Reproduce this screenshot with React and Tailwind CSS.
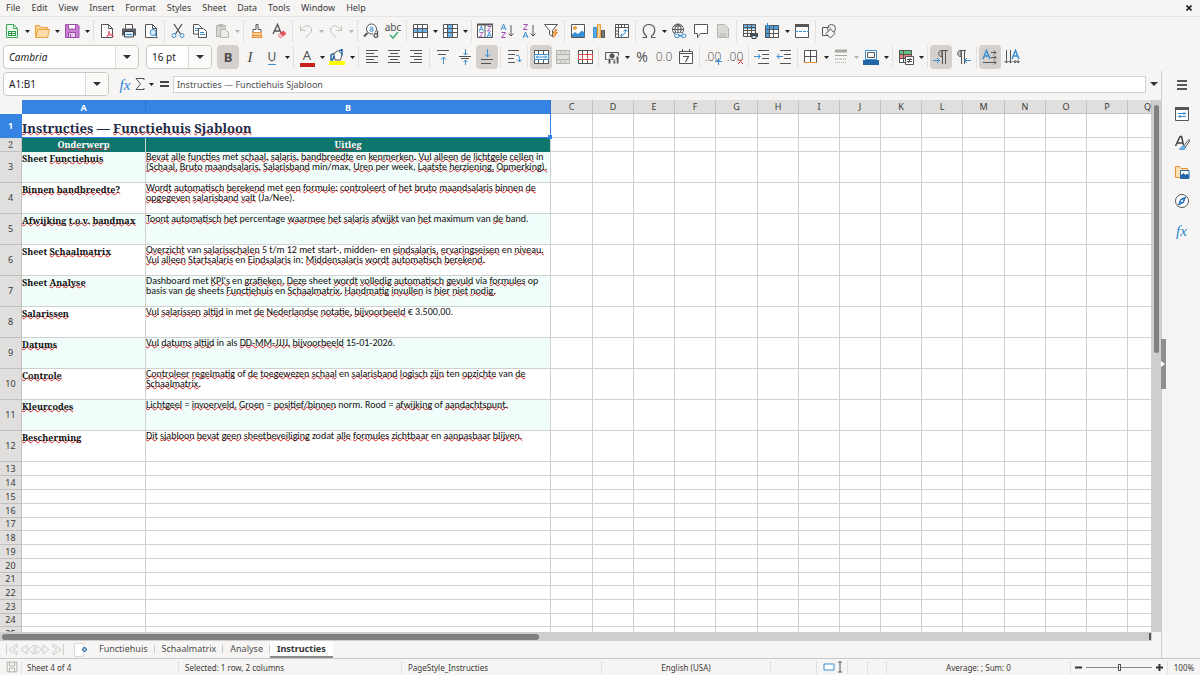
import React, { useState } from 'react';
import clsx from 'clsx';

const G = '#555555';
const B = '#3a8fd3';

const Svg = ({ children, w = 16, h = 16, vb }) => (
    <svg width={w} height={h} viewBox={vb || `0 0 ${w} ${h}`} fill="none" stroke={G} strokeWidth="1" className="block shrink-0">
        {children}
    </svg>
);

const lines = (list) => list.map(([x1, x2, y], i) => <path key={i} d={`M${x1} ${y}H${x2}`} />);

const Table = ({ stroke = G }) => (
    <g stroke={stroke}>
        <path d="M1.5 1.5h14v13h-14zM1.5 5.5h14M1.5 9.5h14M5.5 1.5v13M10.5 1.5v13" />
    </g>
);

const icons = {
    newDoc: (
        <Svg>
            <path d="M2.5 1.5h7l4 4v9h-11z" fill="#e9f7ec" stroke="#43a85c" />
            <path d="M9.5 1.5v4h4" stroke="#43a85c" />
            <path d="M4 8h8v5H4z" fill="#2f9e4b" stroke="none" />
            <path d="M5 9.5h2M8 9.5h3M5 11.5h2M8 11.5h3" stroke="#fff" />
        </Svg>
    ),
    open: (
        <Svg>
            <path d="M1.5 13.5v-11h4l1.500 2h6.500v2" fill="#f7cf95" stroke="#e8a33d" />
            <path d="M1.500 14.500l2.500-8h11.500l-2 8z" fill="#fbdca9" stroke="#e8a33d" />
        </Svg>
    ),
    save: (
        <Svg>
            <path d="M1.500 1.500h12l1.500 1.500v11.500h-13.500z" fill="#c77fd0" stroke="#9c4fa8" />
            <path d="M4.500 1.500h7v4.500h-7z" fill="#fff" stroke="#9c4fa8" />
            <path d="M4.500 9.500h7v5h-7z" fill="#e9c9ee" stroke="#9c4fa8" />
            <path d="M6.500 11v3.500" stroke="#9c4fa8" />
        </Svg>
    ),
    pdf: (
        <Svg>
            <path d="M2.500 1.500h7l4 4v9h-11z" fill="#fff" />
            <path d="M9.500 1.500v4h4" />
            <path d="M7 14.500c2-1 3-3.500 3-6.500M10 8.500c.5 2.500 2 4 4.500 5M8 13c2-1.200 4-1.500 6.500-1" stroke="#d9485a" />
        </Svg>
    ),
    print: (
        <Svg>
            <path d="M4.500 6V1.500h7V6" fill="#fff" />
            <path d="M1 5.500h14v7H1z" fill="#5a5f66" stroke="none" />
            <path d="M3.500 8.500h9v5.500h-9z" fill="#dceefb" stroke="#3b4046" />
            <path d="M5 11.500h6" stroke={B} />
        </Svg>
    ),
    preview: (
        <Svg>
            <path d="M2.500 1.500h7l4 4v9h-11z" fill="#fff" />
            <path d="M9.500 1.500v4h4" />
            <circle cx="10" cy="9.500" r="3" fill="#d9ecfa" stroke={B} />
            <path d="M12 12l3 3" stroke={B} />
        </Svg>
    ),
    cut: (
        <Svg>
            <path d="M4 1l6.500 10M12 1L5.500 11" strokeWidth="1.300" />
            <circle cx="4" cy="12.500" r="2" stroke={B} />
            <circle cx="12" cy="12.500" r="2" stroke={B} />
        </Svg>
    ),
    copy: (
        <Svg>
            <path d="M1.500 1.500h5l3 3v6.500h-8z" fill="#fff" />
            <path d="M3 5.500h4M3 7.500h3" stroke={B} />
            <path d="M6.500 5.500h5l3 3v6h-8z" fill="#fff" />
            <path d="M8 9.500h4M8 11.500h5" stroke={B} />
        </Svg>
    ),
    paste: (
        <Svg>
            <path d="M2.500 2.500h9v11h-9z" fill="#d8d6d4" stroke="#b5b3b0" />
            <path d="M5 1.500h4v2H5z" fill="#c4c2bf" stroke="#b5b3b0" />
            <path d="M6.500 6.500h5l3 3v5h-8z" fill="#ecebea" stroke="#b5b3b0" />
        </Svg>
    ),
    brush: (
        <Svg>
            <path d="M7 1.500h2v5h3v3H4v-3h3z" fill="#fff" />
            <path d="M4 9.500h8l1 5H3z" fill="#f9cf95" stroke="#e8923d" />
            <path d="M3 12.500h10" stroke="#e8923d" />
        </Svg>
    ),
    clear: (
        <Svg>
            <path d="M2 11l4.500-9.500L10 10M3.500 8h5" strokeWidth="1.400" />
            <path d="M7 12.500l5-4.500 3 2.500-5 4.500z" fill="#e4505a" stroke="#e4505a" />
            <path d="M7 12.500l2-2 3 3-1.500 1.500z" fill="#f6c4c8" stroke="none" />
        </Svg>
    ),
    undo: (
        <Svg>
            <path d="M2.500 2.500v5h5M2.500 7.500l4-4c3-2 7 0 7 3.500 0 2.500-2 4-6 7.500" stroke="#c3c1be" />
        </Svg>
    ),
    redo: (
        <Svg>
            <path d="M13.500 2.500v5h-5M13.500 7.500l-4-4c-3-2-7 0-7 3.500 0 2.500 2 4 6 7.500" stroke="#c3c1be" />
        </Svg>
    ),
    find: (
        <Svg>
            <circle cx="8.500" cy="6" r="5" fill="#fff" />
            <path d="M4.500 10L1 13.500" strokeWidth="2" />
            <path d="M7 4.500c1-1 3-.5 3 1V8c-1.500.5-3.200.5-3.200-.8S8.500 6 10 6" stroke={B} />
            <path d="M10 9.500h6V16h-6z" fill="#f6f5f4" stroke="none" />
            <path d="M14.500 7.500v7M14.500 11.500c-1-1.500-3.500-1-3.500 1s2.500 2.500 3.500 1" strokeWidth="1.300" />
        </Svg>
    ),
    table: (fill) => (
        <Svg>
            <path d="M1.500 1.500h14v13h-14z" fill="#fff" stroke="none" />
            {fill === 'row' && <path d="M1 5h15v4H1z" fill="#6db5ea" stroke="none" />}
            {fill === 'col' && <path d="M6 1h4v14H6z" fill="#6db5ea" stroke="none" />}
            <Table />
        </Svg>
    ),
    filter: (
        <Svg>
            <path d="M1.500 1.500h13l-5 6v6l-3-2v-4z" fill="#fff" />
            <path d="M12.500 6.500l-3 4.500h2.500l-2 4 4.500-5.500H12l2-3z" fill="#f5a94e" stroke="#e8923d" />
        </Svg>
    ),
    image: (
        <Svg>
            <path d="M1.500 1.500h13v13h-13z" fill="#fff" />
            <circle cx="5" cy="5" r="1.500" fill="#f5b45e" stroke="#e8923d" />
            <path d="M2 14v-2.500l3-2.500 3 2 4-3.500 2.500 2V14z" fill="#3a8fd3" stroke="none" />
        </Svg>
    ),
    chart: (
        <Svg>
            <path d="M1.500 4.500h3v10h-3z" fill="#5fade6" stroke={B} />
            <path d="M5.500 1.500h3v13h-3z" fill="#fbd298" stroke="#e8a33d" />
            <path d="M9.500 7.500h3v7h-3z" fill="#777" />
        </Svg>
    ),
    pivot: (
        <Svg>
            <path d="M1.500 1.500h13v13h-13z" fill="#fff" />
            <path d="M1.500 4.500h13M4.500 1.500v13M7.500 1.500v3M10.500 1.500v3M1.500 8h3M1.500 11h3" />
            <path d="M6.500 12.500c3.500 0 5-2 5-5.500M9.500 8.500l2-2 2 2M8.500 10.500l-2 2 2 2" stroke={B} />
        </Svg>
    ),
    omega: (
        <Svg>
            <path d="M1.500 14.500h4v-1.500C0 8.500 2 1.500 8 1.500s8 7 2.500 11.500v1.500h4" strokeWidth="1.200" />
        </Svg>
    ),
    link: (
        <Svg>
            <circle cx="7" cy="6.500" r="5.500" />
            <path d="M1.500 6.500h11M7 1v11M3 3h8M3 10h8M7 1C3 4 3 9 7 12M7 1c4 3 4 8 0 11" />
            <path d="M4 10h11v5H4z" fill="#f6f5f4" stroke="none" />
            <rect x="3.500" y="11" width="5" height="3.500" rx="1.700" stroke={B} />
            <rect x="10" y="11" width="5" height="3.500" rx="1.700" stroke={B} />
            <path d="M7 12.800h5" stroke={B} />
        </Svg>
    ),
    comment: (
        <Svg>
            <path d="M1.500 1.500h13v9h-7l-3 4v-4h-3z" fill="#fff" />
        </Svg>
    ),
    headerDoc: (
        <Svg>
            <path d="M2.500 1.500h7l4 4v9h-11z" fill="#dbdad8" stroke="#b5b3b0" />
            <path d="M4.500 11h7M4.500 13h7" stroke="#b5b3b0" />
        </Svg>
    ),
    printArea: (
        <Svg>
            <path d="M1 1h13v5H1z" fill="#6db5ea" stroke="none" />
            <path d="M1.500 1.500h12v12h-12zM1.500 4.500h12M1.500 7.500h12M1.500 10.500h12M5.500 1.500v12M9.500 1.500v12" />
            <path d="M8 10h8v4H8z" fill="#4c5157" stroke="none" />
            <path d="M10 12.500h4v3h-4z" fill="#cfe6f8" stroke="#3b4046" />
        </Svg>
    ),
    freeze: (
        <Svg>
            <path d="M1.500 2.500h13v12h-13z" fill="#fff" />
            <path d="M2 2h13v4H6v9H2z" fill="#4ba0e0" stroke="none" />
            <path d="M1.500 2.500h13v12h-13zM1.500 6.500h13M5.500 2.500v12M9.500 2.500v12M1.500 10.500h13" />
            <path d="M3.500 0v5M1 2.500h5" stroke={B} />
        </Svg>
    ),
    split: (
        <Svg>
            <path d="M1.500 1.500h13v13h-13z" fill="#fff" />
            <path d="M1 1h14v3H1z" fill={G} stroke="none" />
            <path d="M1 8.500h14" stroke={B} strokeDasharray="3 1" />
        </Svg>
    ),
    shapes: (
        <Svg>
            <path d="M1.500 4.500h8v8h-8z" />
            <circle cx="10.500" cy="5.500" r="4" fill="#f6f5f4" fillOpacity=".5" />
            <path d="M9.500 6l4.500 4.500-4.500 4.500L5 10.500z" fill="#f6f5f4" />
        </Svg>
    ),
    // formatting bar
    vTop: (
        <Svg>{lines([[2, 14, 1.5], [3, 11, 5.5]])}<path d="M8.500 15V8M6 10.500L8.500 8l2.500 2.500" stroke={B} /></Svg>
    ),
    vMid: (
        <Svg>{lines([[2, 14, 7.5], [4, 12, 9.5]])}<path d="M8.500 0v6M6.500 4l2 2 2-2M8.500 16v-5M6.500 13l2-2 2 2" stroke={B} /></Svg>
    ),
    vBot: (
        <Svg>{lines([[2, 14, 10.5], [2, 12, 14.5]])}<path d="M8.500 0v8M6 5.500L8.500 8 11 5.500" stroke={B} /></Svg>
    ),
    wrap: (
        <Svg>{lines([[2, 13, 1.500], [2, 9, 5.500], [2, 8, 9.500], [2, 9, 13.500]])}<path d="M10 6.500h1.500c1.500 0 2 1 2 3v3M11 10.500l2.500 2.500 2-2.500" stroke={B} /></Svg>
    ),
    mergeOn: (
        <Svg><path d="M1.500 1.500h14v13h-14z" fill="#fff" /><Table /><path d="M1.500 5.500h14v5h-14z" fill="#fff" stroke={B} /><path d="M3 8h11M5 6.500L3.500 8 5 9.500M12 6.500L13.500 8 12 9.500" stroke={B} /></Svg>
    ),
    merge: (
        <Svg><path d="M1.500 1.500h13v13h-13zM1.500 5.500h13M1.500 10.500h13M6 1.500v4M10 1.500v4M6 10.500v4M10 10.500v4" fill="#e0dfdd" stroke="#b5b3b0" /></Svg>
    ),
    unmerge: (
        <Svg><path d="M1.500 1.500h14v13h-14z" fill="#fff" /><Table /><path d="M1.500 5.500h14v5h-14zM5.500 5.500v5M10.500 5.500v5" fill="#fff" stroke="#dd4b4b" /></Svg>
    ),
    currency: (
        <Svg>
            <path d="M1.500 3.500h13v7h-13z" />
            <circle cx="8" cy="7" r="2.200" fill={G} />
            <path d="M4 9h3v6H4zM9 11h3v4H9zM12 7h3v8h-3z" fill={G} stroke="#f6f5f4" />
        </Svg>
    ),
    date: (
        <Svg>
            <path d="M1.500 2.500h13v12h-13zM1.500 4.500h13M4.500 0v3M11.500 0v3" fill="#fff" />
            <path d="M5 7.500h5.500L7.500 13" strokeWidth="1.200" />
        </Svg>
    ),
    indent: (
        <Svg>{lines([[4, 15, 1.5], [8, 15, 5.5], [8, 15, 9.5], [4, 15, 14.5]])}<path d="M0 7.500h6M4 5l2.500 2.500L4 10" stroke={B} /></Svg>
    ),
    outdent: (
        <Svg>{lines([[4, 15, 1.5], [8, 15, 5.5], [8, 15, 9.5], [4, 15, 14.5]])}<path d="M1 7.500h6M3.500 5L1 7.500 3.500 10" stroke={B} /></Svg>
    ),
    borders: (
        <Svg><path d="M1.500 1.500h12v12h-12zM7.500 1.500v12M1.500 7.500h12" fill="#fff" /><path d="M1 13.500h13" stroke="#e8923d" /></Svg>
    ),
    lineStyle: (
        <Svg>
            <path d="M2 2h12" stroke="#aaa8a5" strokeWidth="3" />
            <path d="M2 6.500h12" stroke="#aaa8a5" />
            <path d="M2 10h12" stroke="#aaa8a5" strokeDasharray="3 1" />
            <path d="M2 13.500h12" stroke="#aaa8a5" strokeDasharray="1 1" />
        </Svg>
    ),
    lineColor: (
        <Svg>
            <path d="M2.500 1.500h11v9h-11z" fill="#fff" stroke={B} />
            <path d="M4.500 3.500h7v5h-7z" />
            <path d="M0 11h16v5H0z" fill="#2465a8" stroke="none" />
        </Svg>
    ),
    conditional: (
        <Svg>
            <path d="M1.500 1.500h12v12h-12z" fill="#fff" />
            <path d="M2 2h11v3H2z" fill="#5fc27e" stroke="none" />
            <path d="M2 5h11v4H2z" fill="#ea8080" stroke="none" />
            <path d="M1.500 5.500h12M1.500 9.500h12M5.500 1.500v12M1.500 1.500h12v12h-12z" />
            <path d="M7.500 7.500h8v8h-8z" fill="#fff" />
            <path d="M9 10.500h5M9 12.500h5M12.500 9l-2 5" />
        </Svg>
    ),
    ltr: (
        <Svg>
            <path d="M9 1.500C4.500 1 4.500 8 9 7.500z" fill="#c4c4c4" />
            <path d="M8 1.500h7M9.500 1.500V15M12.500 1.500V15" />
            <path d="M0 11.500h6M4 9l2.500 2.500L4 14" stroke={B} />
        </Svg>
    ),
    rtl: (
        <Svg>
            <path d="M6 1.500C1.500 1 1.500 8 6 7.500z" fill="#c4c4c4" />
            <path d="M5 1.500h6M6.500 1.500V15M9.500 1.500V15" />
            <path d="M16 11.500h-6M12 9l-2.500 2.500L12 14" stroke={B} />
        </Svg>
    ),
    textLr: (
        <Svg>
            <path d="M1 10L4.500 1.500 8 10M2.500 7h4" stroke={B} strokeWidth="1.500" />
            <path d="M9 3.500h5M9 8.500h5M1 13.500h13M12 1.500l2 2-2 2M12 6.500l2 2-2 2M12 11.500l2 2-2 2" />
        </Svg>
    ),
    textTb: (
        <Svg>
            <path d="M8 10l3.500-8.500L15 10M9.500 7h4" stroke={B} strokeWidth="1.500" />
            <path d="M2.500 1v13M6.500 1v13M11 11v3M14 11v3M.5 12l2 2 2-2M5 12l1.500 2 2-2M9.500 12l1.500 2 1.500-2M12.500 12l1.500 2 1.500-2" />
        </Svg>
    ),
    // sidebar
    menu: <Svg>{[4, 8, 12].map((y) => <path key={y} d={`M3 ${y}h10`} strokeWidth="1.600" stroke="#333" />)}</Svg>,
    properties: (
        <Svg>
            <path d="M1.500 1.500h13v13h-13z" fill="#fff" />
            <path d="M1 1h14v3H1z" fill={G} stroke="none" />
            <path d="M4 7.500h8M4 10.500h8M10 6v3M6 9v3" stroke={B} />
        </Svg>
    ),
    styles: (
        <Svg>
            <path d="M1.500 11L6 1.500h1.500L9.500 10M3.500 8h6" strokeWidth="1.500" stroke="#444" />
            <path d="M15 4.500l-5 6 1.500 1.500 4-6z" fill="#fff" />
            <path d="M10 10.500c-2 0-2 2-4.500 3.500 3 1.500 6 .5 6-2z" fill="#6db5ea" stroke={B} />
        </Svg>
    ),
    gallery: (
        <Svg>
            <path d="M1.500 13.500v-11h4l1.500 2h6.500v9z" fill="#fde0b4" stroke="#e8923d" />
            <path d="M6.500 6.500h8.500v8h-8.500z" fill="#fff" stroke="#2465a8" />
            <path d="M7 14v-3l2.500-2 2 2 1.500-1.500 2 2V14z" fill="#2465a8" stroke="none" />
        </Svg>
    ),
    navigator: (
        <Svg>
            <circle cx="8" cy="8" r="6.500" fill="#fff" />
            <path d="M11.500 4L9.500 9.500 4.500 12l2-5.500z" fill="#3a8fd3" stroke="#2465a8" />
            <circle cx="8" cy="8" r="1" fill="#fff" stroke="none" />
        </Svg>
    ),
    disk: (
        <Svg w={12} h={12} vb="0 0 16 16">
            <path d="M1.500 1.500h13v13h-13zM4.500 1.500v5h7v-5M4.500 14.500v-5h7v5" stroke="#a09e9b" />
        </Svg>
    ),
};

const align = (kind) => {
    const shift = { left: 0, center: 2, right: 4 }[kind];
    return (
        <Svg>
            {lines([0, 1, 2, 3, 4].map((i) => (i % 2 ? [2 + shift, 10 + shift, 1.5 + i * 3] : [2, 14, 1.5 + i * 3])))}
        </Svg>
    );
};

const Glyph = ({ children, className }) => (
    <span className={clsx('leading-4 text-[#4d4d4d]', className)}>{children}</span>
);

const Tool = ({ label, active, children }) => (
    <button
        type="button"
        aria-label={label}
        aria-pressed={active}
        className={clsx('flex h-6 w-[22px] shrink-0 items-center justify-center rounded', active && 'bg-[#d3d0cd]')}
    >
        {children}
    </button>
);

const Caret = () => (
    <svg width="8" height="4" viewBox="0 0 8 4" className="block" fill="currentColor"><path d="M0 0h8L4 4z" /></svg>
);

const Drop = ({ label, off }) => (
    <button
        type="button"
        aria-label={label}
        className={clsx('flex h-6 w-2 shrink-0 items-center justify-center pt-px', off ? 'text-[#b5b3b0]' : 'text-[#222]')}
    >
        <svg width="5" height="3" viewBox="0 0 5 3" fill="currentColor"><path d="M0 0h5L2.500 3z" /></svg>
    </button>
);

const Sep = () => (
    <div className="flex w-[5px] shrink-0 justify-center"><div className="h-[22px] w-px bg-[#e3e1df]" /></div>
);

const LETTER_A = 'M0 6L2.500 0 5 6M1 4h3';
const LETTER_Z = 'M.5.5h4L.5 5.500h4';

const SortBox = () => (
    <Svg>
        <path d="M.5 1.500h15v13H.5z" fill="#fff" />
        <path d="M0 1.500h16" strokeWidth="2" />
        <path d="M8 1v14" />
        <path d={LETTER_A} transform="translate(2 3) scale(.9)" stroke={B} />
        <path d={LETTER_Z} transform="translate(2 9) scale(.9)" stroke="#a44ab5" />
        <path d={LETTER_Z} transform="translate(10 3) scale(.9)" stroke="#a44ab5" />
        <path d={LETTER_A} transform="translate(10 9) scale(.9)" stroke={B} />
    </Svg>
);

const SortIcon = ({ desc }) => (
    <Svg>
        <path d={desc ? LETTER_Z : LETTER_A} transform="translate(2 1)" stroke={desc ? '#a44ab5' : B} />
        <path d={desc ? LETTER_A : LETTER_Z} transform="translate(2 9)" stroke={desc ? B : '#a44ab5'} />
        <path d="M12 2v11M9.500 10.500L12 13l2.500-2.500" />
    </Svg>
);

const Decimal = ({ remove }) => (
    <span className="relative flex">
        <Glyph className="font-['Open_Sans'] text-[12px] font-light">.00</Glyph>
        <svg className="absolute -right-px bottom-0" width="7" height="7" viewBox="0 0 7 7" fill="none" stroke={remove ? '#e0454f' : B}>
            <path d={remove ? 'M1 1l5 5M6 1L1 6' : 'M3.500 0v7M0 3.500h7'} />
        </svg>
    </span>
);

const Fx = () => <i className="font-['Liberation_Serif'] text-[15px] leading-4 text-[#2a86d1]">fx</i>;

const MENUS = ['File', 'Edit', 'View', 'Insert', 'Format', 'Styles', 'Sheet', 'Data', 'Tools', 'Window', 'Help'];

const MainBar = () => (
    <div className="flex h-7 items-center pl-px">
        <Tool label="New">{icons.newDoc}</Tool><Drop label="New from" />
        <Tool label="Open">{icons.open}</Tool><Drop label="Recent files" />
        <Tool label="Save">{icons.save}</Tool><Drop label="Save options" />
        <Sep />
        <Tool label="Export as PDF">{icons.pdf}</Tool>
        <Tool label="Print">{icons.print}</Tool>
        <Tool label="Print preview">{icons.preview}</Tool>
        <Sep />
        <Tool label="Cut">{icons.cut}</Tool>
        <Tool label="Copy">{icons.copy}</Tool>
        <Tool label="Paste">{icons.paste}</Tool><Drop label="Paste options" off />
        <Sep />
        <Tool label="Clone formatting">{icons.brush}</Tool>
        <Tool label="Clear formatting">{icons.clear}</Tool>
        <Sep />
        <Tool label="Undo">{icons.undo}</Tool><Drop label="Undo list" off />
        <Tool label="Redo">{icons.redo}</Tool><Drop label="Redo list" off />
        <Sep />
        <Tool label="Find and replace">{icons.find}</Tool>
        <Tool label="Spelling">
            <span className="flex flex-col items-center text-[10px] leading-[9px] text-[#4d4d4d]">
                abc
                <Svg w={12} h={7}><path d="M3 3l3 3 5-6" stroke="#35b06a" strokeWidth="1.500" /></Svg>
            </span>
        </Tool>
        <Sep />
        <Tool label="Row">{icons.table('row')}</Tool><Drop label="Row options" />
        <Tool label="Column">{icons.table('col')}</Tool><Drop label="Column options" />
        <Sep />
        <Tool label="Sort"><SortBox /></Tool>
        <Tool label="Sort ascending"><SortIcon /></Tool>
        <Tool label="Sort descending"><SortIcon desc /></Tool>
        <Tool label="AutoFilter">{icons.filter}</Tool>
        <Sep />
        <Tool label="Insert image">{icons.image}</Tool>
        <Tool label="Insert chart">{icons.chart}</Tool>
        <Tool label="Pivot table">{icons.pivot}</Tool>
        <Sep />
        <Tool label="Special character">{icons.omega}</Tool><Drop label="More characters" />
        <Tool label="Hyperlink">{icons.link}</Tool>
        <Tool label="Comment">{icons.comment}</Tool>
        <Tool label="Headers and footers">{icons.headerDoc}</Tool>
        <Sep />
        <Tool label="Print area">{icons.printArea}</Tool>
        <Tool label="Freeze">{icons.freeze}</Tool><Drop label="Freeze options" />
        <Tool label="Split window">{icons.split}</Tool>
        <Sep />
        <Tool label="Draw functions">{icons.shapes}</Tool>
    </div>
);

const Combo = ({ label, value, options, width, italic }) => (
    <div className={clsx('relative h-6 shrink-0 rounded border border-[#cdc7c2] bg-white', width)}>
        <select
            aria-label={label}
            defaultValue={value}
            className={clsx('block h-full w-full appearance-none bg-transparent pl-[5px] text-[10px] text-[#222] outline-none', italic && 'italic')}
        >
            {options.map((o) => <option key={o}>{o}</option>)}
        </select>
        <span className="pointer-events-none absolute inset-y-0 right-0 flex w-[23px] items-center justify-center rounded-r border-l border-[#dedad6] bg-[#fafaf9] text-[#333]">
            <Caret />
        </span>
    </div>
);

const FormatBar = () => (
    <div className="flex h-[26px] items-center pb-[2px] pl-[3px]">
        <Combo label="Font name" value="Cambria" options={['Cambria', 'Calibri']} width="w-[136px] mr-[7px]" italic />
        <Combo label="Font size" value="16 pt" options={['10 pt', '16 pt']} width="w-[66px] mr-[5px]" />
        <Tool label="Bold" active><Glyph className="text-[13px] font-bold">B</Glyph></Tool>
        <Tool label="Italic"><Glyph className="font-['Liberation_Serif'] text-[15px] italic">I</Glyph></Tool>
        <Tool label="Underline"><Glyph className="border-b border-[#3a8fd3] text-[12px] leading-[14px]">U</Glyph></Tool>
        <Drop label="Underline options" />
        <Sep />
        <Tool label="Font color"><Glyph className="w-[15px] border-b-4 border-[#c9211e] text-[13px] leading-3">A</Glyph></Tool>
        <Drop label="Font colors" />
        <Tool label="Highlighting">
            <Svg>
                <path d="M5 4.500l4-3 4 4-1.500 5.500H6z" fill="#fff" />
                <path d="M5 4.500L2 6v5h1.500L5 7M10 2l3-1.500v6" stroke="#2465a8" strokeWidth="1.500" />
                <path d="M0 12h16v4H0z" fill="#ffff00" stroke="none" />
            </Svg>
        </Tool>
        <Drop label="Highlight colors" />
        <Sep />
        <Tool label="Align left">{align('left')}</Tool>
        <Tool label="Center">{align('center')}</Tool>
        <Tool label="Align right">{align('right')}</Tool>
        <Sep />
        <Tool label="Align top">{icons.vTop}</Tool>
        <Tool label="Center vertically">{icons.vMid}</Tool>
        <Tool label="Align bottom" active>{icons.vBot}</Tool>
        <Sep />
        <Tool label="Wrap text">{icons.wrap}</Tool>
        <Sep />
        <Tool label="Merge and center" active>{icons.mergeOn}</Tool>
        <Tool label="Merge cells">{icons.merge}</Tool>
        <Tool label="Unmerge cells">{icons.unmerge}</Tool>
        <Sep />
        <Tool label="Currency">{icons.currency}</Tool><Drop label="Currencies" />
        <Tool label="Percent"><Glyph className="font-['Open_Sans'] text-[14px]">%</Glyph></Tool>
        <Tool label="Number"><Glyph className="font-['Open_Sans'] text-[12px] font-light">0.0</Glyph></Tool>
        <Tool label="Date">{icons.date}</Tool>
        <Sep />
        <Tool label="Add decimal place"><Decimal /></Tool>
        <Tool label="Delete decimal place"><Decimal remove /></Tool>
        <Sep />
        <Tool label="Increase indent">{icons.indent}</Tool>
        <Tool label="Decrease indent">{icons.outdent}</Tool>
        <Sep />
        <Tool label="Borders">{icons.borders}</Tool><Drop label="Border options" />
        <Tool label="Border style">{icons.lineStyle}</Tool><Drop label="Border styles" off />
        <Tool label="Border color">{icons.lineColor}</Tool><Drop label="Border colors" />
        <Sep />
        <Tool label="Conditional">{icons.conditional}</Tool><Drop label="Conditional options" />
        <Sep />
        <Tool label="Left to right" active>{icons.ltr}</Tool>
        <Tool label="Right to left">{icons.rtl}</Tool>
        <Sep />
        <Tool label="Text left to right" active>{icons.textLr}</Tool>
        <Tool label="Text top to bottom">{icons.textTb}</Tool>
    </div>
);

const FormulaBar = () => {
    const [formula, setFormula] = useState('Instructies — Functiehuis Sjabloon');
    return (
        <div className="flex h-[29px] shrink-0 items-center pb-[3px] pl-[3px]">
            <div className="mr-2 flex h-6 w-[106px] shrink-0 overflow-hidden rounded border border-[#cdc7c2] bg-white">
                <input aria-label="Name box" defaultValue="A1:B1" className="w-full min-w-0 flex-1 pl-[5px] text-[10px] text-[#222] outline-none" />
                <button type="button" aria-label="Named ranges" className="flex w-[23px] shrink-0 items-center justify-center border-l border-[#dedad6] bg-[#fafaf9] text-[#333]">
                    <Caret />
                </button>
            </div>
            <button type="button" aria-label="Function wizard" className="w-4"><Fx /></button>
            <button type="button" aria-label="Select function" className="flex w-[14px] justify-center text-[#4d4d4d]">
                <Svg w={10} h={14}><path d="M9 3V1.500H1L5.500 7 1 12.500h8V11" /></Svg>
            </button>
            <Drop label="Function list" />
            <button type="button" aria-label="Formula" className="flex w-[18px] justify-center">
                <Svg w={9} h={6}><path d="M0 1h9M0 5h9" stroke="#444" strokeWidth="2" /></Svg>
            </button>
            <input
                aria-label="Input line"
                value={formula}
                onChange={(e) => setFormula(e.target.value)}
                className="h-[17px] min-w-0 flex-1 border border-[#d5d2cf] bg-white pl-[3px] text-[9px] text-[#4d4d4d] outline-none"
            />
            <button type="button" aria-label="Expand formula bar" className="flex w-[15px] justify-center text-[#333]"><Caret /></button>
        </div>
    );
};

// the last column has no width of its own and runs on to the window's edge
const COLS = [
    ['A', 'w-[124px]'], ['B', 'w-[405px]'], ['C', 'w-[42px]'], ['D', 'w-[41px]'], ['E', 'w-[41px]'], ['F', 'w-[41px]'],
    ['G', 'w-[42px]'], ['H', 'w-[41px]'], ['I', 'w-[41px]'], ['J', 'w-[41px]'], ['K', 'w-[41px]'], ['L', 'w-[41px]'],
    ['M', 'w-[42px]'], ['N', 'w-[41px]'], ['O', 'w-[41px]'], ['P', 'w-[41px]'], ['Q', ''],
];

const ROWS = [
    ['Sheet Functiehuis', 'Bevat alle functies met schaal, salaris, bandbreedte en kenmerken. Vul alleen de lichtgele cellen in\n(Schaal, Bruto maandsalaris, Salarisband min/max, Uren per week, Laatste herziening, Opmerking).'],
    ['Binnen bandbreedte?', 'Wordt automatisch berekend met een formule: controleert of het bruto maandsalaris binnen de\nopgegeven salarisband valt (Ja/Nee).'],
    ['Afwijking t.o.v. bandmax', 'Toont automatisch het percentage waarmee het salaris afwijkt van het maximum van de band.'],
    ['Sheet Schaalmatrix', 'Overzicht van salarisschalen 5 t/m 12 met start-, midden- en eindsalaris, ervaringseisen en niveau.\nVul alleen Startsalaris en Eindsalaris in; Middensalaris wordt automatisch berekend.'],
    ['Sheet Analyse', "Dashboard met KPI's en grafieken. Deze sheet wordt volledig automatisch gevuld via formules op\nbasis van de sheets Functiehuis en Schaalmatrix. Handmatig invullen is hier niet nodig."],
    ['Salarissen', 'Vul salarissen altijd in met de Nederlandse notatie, bijvoorbeeld € 3.500,00.'],
    ['Datums', 'Vul datums altijd in als DD-MM-JJJJ, bijvoorbeeld 15-01-2026.'],
    ['Controle', 'Controleer regelmatig of de toegewezen schaal en salarisband logisch zijn ten opzichte van de\nSchaalmatrix.'],
    ['Kleurcodes', 'Lichtgeel = invoerveld, Groen = positief/binnen norm. Rood = afwijking of aandachtspunt.'],
    ['Bescherming', 'Dit sjabloon bevat geen sheetbeveiliging zodat alle formules zichtbaar en aanpasbaar blijven.'],
];

const EMPTY_ROWS = [14, 14, 14, 14, 13, 14, 14, 14, 13, 14, 14, 13, 14];

const KNOWN = new Set([
    'sheet', 'sheets', 'met', 'en', 'in', 'in;', 'min/max,', 'per', 'week,', 'of', 'percentage', 'van', 'maximum', 'band.',
    '5', 't/m', '12', 'start-,', 'midden-', 'dashboard', 'via', 'op', 'basis', 'is', 'als', '€', '3.500,00.', '15-01-2026.',
    'ten', '=', 'norm.', 'rood', '—', '(ja/nee).', 'zodat',
]);

// wavy line under every word the dictionary does not know
const Spell = ({ text }) => text.split(/(\s+)/).map((word, i) => (
    !word.trim() || KNOWN.has(word.toLowerCase())
        ? word
        : <span key={i} className="underline decoration-[#dc1f1f] decoration-wavy decoration-1 underline-offset-[-2px] [text-decoration-skip-ink:none]">{word}</span>
));

const RowHead = ({ n, active }) => (
    <th scope="row" className={clsx('border-r border-b p-0 text-center align-middle text-[9px] leading-3', active ? 'border-[#3584e4] bg-[#3584e4] font-bold text-white' : 'border-[#c3c1bf] bg-[#e1dfdd] font-normal text-[#3a3a3a]')}>
        {n}
    </th>
);

const Blanks = ({ from }) => COLS.slice(from).map(([c]) => <td key={c} className="border-r border-b border-[#d0d0d0]" />);

const Grid = () => (
    <div className="min-h-0 min-w-0 flex-1 overflow-hidden bg-white">
        <table className="w-full table-fixed border-separate border-spacing-0">
            <colgroup>
                <col className="w-[22px]" />
                {COLS.map(([c, w]) => <col key={c} className={w} />)}
            </colgroup>
            <thead>
                <tr className="h-[14px]">
                    <td className="bg-[#f6f5f4]" />
                    {COLS.map(([c], i) => (
                        <th
                            key={c}
                            scope="col"
                            className={clsx(
                                'border-r p-0 text-[9px] leading-[13px]',
                                i < 2 ? 'border-[#2b74cf] bg-[#3584e4] font-bold text-white' : 'border-b border-[#c3c1bf] bg-[#e1dfdd] font-normal text-[#3a3a3a]',
                                c === 'Q' && 'text-right'
                            )}
                        >
                            {c}
                        </th>
                    ))}
                </tr>
            </thead>
            <tbody>
                <tr className="h-6">
                    <RowHead n={1} active />
                    <td colSpan={2} className="relative border-r border-b border-[#3584e4] p-0 align-bottom font-['Noto_Serif','DejaVu_Serif',serif] text-[13px] leading-[18px] font-bold whitespace-nowrap text-[#1e2a47]">
                        <Spell text="Instructies — Functiehuis Sjabloon" />
                        <span className="absolute -right-[2px] -bottom-[2px] h-1 w-1 bg-[#3584e4]" />
                    </td>
                    <Blanks from={2} />
                </tr>
                <tr className="h-[14px] font-['Noto_Serif','DejaVu_Serif',serif] text-[9px] leading-3 font-bold text-white">
                    <RowHead n={2} />
                    <td className="border-r border-[#d0d0d0] bg-[#0f766e] p-0 text-center"><Spell text="Onderwerp" /></td>
                    <td className="border-r border-[#d0d0d0] bg-[#0f766e] p-0 text-center"><Spell text="Uitleg" /></td>
                    <Blanks from={2} />
                </tr>
                {ROWS.map(([title, text], i) => (
                    <tr key={title} className="h-[31px]">
                        <RowHead n={i + 3} />
                        <td className={clsx("border-r border-b border-[#d0d0d0] p-0 pt-px align-top font-['Noto_Serif','DejaVu_Serif',serif] text-[9px] leading-3 font-bold whitespace-nowrap text-[#111]", i % 2 === 0 && 'bg-[#f0fdfa]')}>
                            <Spell text={title} />
                        </td>
                        <td className={clsx('border-r border-b border-[#d0d0d0] p-0 align-top font-[Carlito,Lato,sans-serif] text-[10px] leading-[10px] whitespace-pre text-[#111]', i % 2 === 0 && 'bg-[#f0fdfa]')}>
                            <Spell text={text} />
                        </td>
                        <Blanks from={2} />
                    </tr>
                ))}
                {EMPTY_ROWS.map((h, i) => (
                    <tr key={i} className={h === 14 ? 'h-[14px]' : 'h-[13px]'}>
                        <RowHead n={i + 13} />
                        <Blanks from={0} />
                    </tr>
                ))}
            </tbody>
        </table>
    </div>
);

const SHEETS = ['Functiehuis', 'Schaalmatrix', 'Analyse', 'Instructies'];

const NAV = {
    First: 'M1.500 1v11M12 1L4 6.500 12 12V9L8 6.500 12 4z',
    Previous: 'M7 2L1 6.500 7 11zM14 2L8 6.500 14 11z',
    Next: 'M1 2l6 4.500L1 11zM8 2l6 4.500L8 11z',
    Last: 'M13.500 1v11M3 1l8 5.500L3 12V9l4-2.500L3 4z',
};

const SheetTabs = () => {
    const [current, setCurrent] = useState('Instructies');
    return (
        <div className="flex h-[17px] shrink-0 items-stretch pl-[5px] text-[9px]">
            {Object.entries(NAV).map(([name, d]) => (
                <button key={name} type="button" aria-label={`${name} sheet`} className="flex w-[15px] items-center">
                    <Svg w={15} h={13}><path d={d} stroke="#cfcdca" /></Svg>
                </button>
            ))}
            <button type="button" aria-label="Add sheet" className="mr-[5px] ml-2 flex w-[14px] items-center">
                <Svg w={14} h={15}>
                    <path d="M1.500 1.500h9v13h-9z" fill="#fff" stroke="#dddbd8" />
                    <path d="M11.500 5v5M9 7.500h5" stroke="#2465a8" strokeWidth="2" />
                    <circle cx="11.500" cy="7.500" r="1" fill="#fff" stroke="none" />
                </Svg>
            </button>
            <div role="tablist" className="flex items-stretch">
                {SHEETS.map((s) => (
                    <button
                        key={s}
                        type="button"
                        role="tab"
                        aria-selected={s === current}
                        onClick={() => setCurrent(s)}
                        className={clsx(
                            'relative border-b-2 px-[7px] pt-px leading-[14px]',
                            s === current
                                ? 'border-[#8b8b8b] bg-white font-bold text-[#333]'
                                : 'border-transparent text-[#4d4d4d] after:absolute after:top-1 after:right-0 after:h-2 after:w-px after:bg-[#c9c7c5]'
                        )}
                    >
                        {s}
                    </button>
                ))}
            </div>
        </div>
    );
};

const SideBar = () => (
    <aside className="relative flex w-[39px] shrink-0 flex-col items-center gap-[5px] border-l border-[#d0cecc] pt-[2px] pl-px">
        {['menu', 'properties', 'styles', 'gallery', 'navigator'].map((k) => (
            <button key={k} type="button" aria-label={k} className="flex h-6 w-6 items-center justify-center">{icons[k]}</button>
        ))}
        <button type="button" aria-label="functions" className="h-6 w-6"><Fx /></button>
        <button type="button" aria-label="Hide sidebar" className="absolute top-[268px] -left-px flex h-[50px] w-[5px] items-center bg-[#8f8f8f]">
            <svg width="4" height="6" viewBox="0 0 4 6" fill="#fff"><path d="M0 0l4 3-4 3z" /></svg>
        </button>
    </aside>
);

const StatusBar = () => (
    <footer className="grid h-[17px] shrink-0 grid-cols-[22px_157fr_223fr_200fr_169fr_46px_31px_20px_19px_184fr_97px_32px] items-center border-t border-[#c9c7c5] text-[8px] leading-[13px] text-[#3a3a3a] *:h-[13px] *:border-r *:border-[#e3e1df]">
        <div className="flex items-center pl-[6px]">{icons.disk}</div>
        <div className="pl-[5px]">Sheet 4 of 4</div>
        <div className="pl-[6px]">Selected: 1 row, 2 columns</div>
        <div className="pl-[6px]">PageStyle_Instructies</div>
        <div className="text-center">English (USA)</div>
        <div />
        <div className="flex items-center pl-[6px]">
            <Svg w={20} h={12}>
                <path d="M1 3h10v6H1z" fill="#fff" stroke={B} />
                <path d="M15 1h4M15 11h4M17 1v10" />
            </Svg>
        </div>
        <div />
        <div />
        <div className="text-center">Average: ; Sum: 0</div>
        <div className="flex items-center justify-center gap-1">
            <button type="button" aria-label="Zoom out"><Svg w={7} h={7}><path d="M0 3.500h7" stroke="#333" strokeWidth="2" /></Svg></button>
            <input
                type="range"
                aria-label="Zoom"
                min="0"
                max="100"
                defaultValue="50"
                className="h-3 w-[66px] appearance-none bg-transparent [&::-webkit-slider-runnable-track]:h-px [&::-webkit-slider-runnable-track]:bg-[#8b8b8b] [&::-webkit-slider-thumb]:-mt-[3px] [&::-webkit-slider-thumb]:h-[7px] [&::-webkit-slider-thumb]:w-[3px] [&::-webkit-slider-thumb]:appearance-none [&::-webkit-slider-thumb]:border [&::-webkit-slider-thumb]:border-[#555] [&::-webkit-slider-thumb]:bg-white"
            />
            <button type="button" aria-label="Zoom in"><Svg w={7} h={7}><path d="M0 3.500h7M3.500 0v7" stroke="#333" strokeWidth="2" /></Svg></button>
        </div>
        <div className="border-r-0! text-center">100%</div>
    </footer>
);

const App = () => (
    <div className="flex h-screen flex-col overflow-hidden bg-[#f6f5f4] font-['Noto_Sans','Open_Sans',sans-serif] text-[#4d4d4d]">
        <header className="shrink-0">
            <nav className="flex h-[17px] items-center gap-[11px] border-b border-[#e6e4e2] pl-[6px] text-[9px] text-[#3a3a3a]">
                {MENUS.map((m) => <button key={m} type="button">{m}</button>)}
                <button type="button" aria-label="Close document" className="mr-2 ml-auto">
                    <Svg w={6} h={6}><path d="M.5.5l5 5M5.500.5l-5 5" stroke="#222" strokeWidth="1.700" /></Svg>
                </button>
            </nav>
            <MainBar />
            <FormatBar />
        </header>
        <main className="flex min-h-0 flex-1">
            <div className="flex min-w-0 flex-1 flex-col">
                <FormulaBar />
                <div className="flex min-h-0 flex-1">
                    <Grid />
                    <div className="w-[9px] shrink-0 bg-[#cecece] px-[2px] pt-[5px]">
                        <div className="h-[47%] rounded-full bg-[#808080]" />
                    </div>
                </div>
                <div className="mr-[9px] flex h-[9px] shrink-0 items-center justify-between bg-[#cecece] pl-[2px]">
                    <div className="h-[6px] w-7/15 rounded-full bg-[#808080]" />
                    <div className="mr-px h-[7px] w-[2px] bg-[#555]" />
                </div>
                <SheetTabs />
            </div>
            <SideBar />
        </main>
        <StatusBar />
    </div>
);

export default App;
